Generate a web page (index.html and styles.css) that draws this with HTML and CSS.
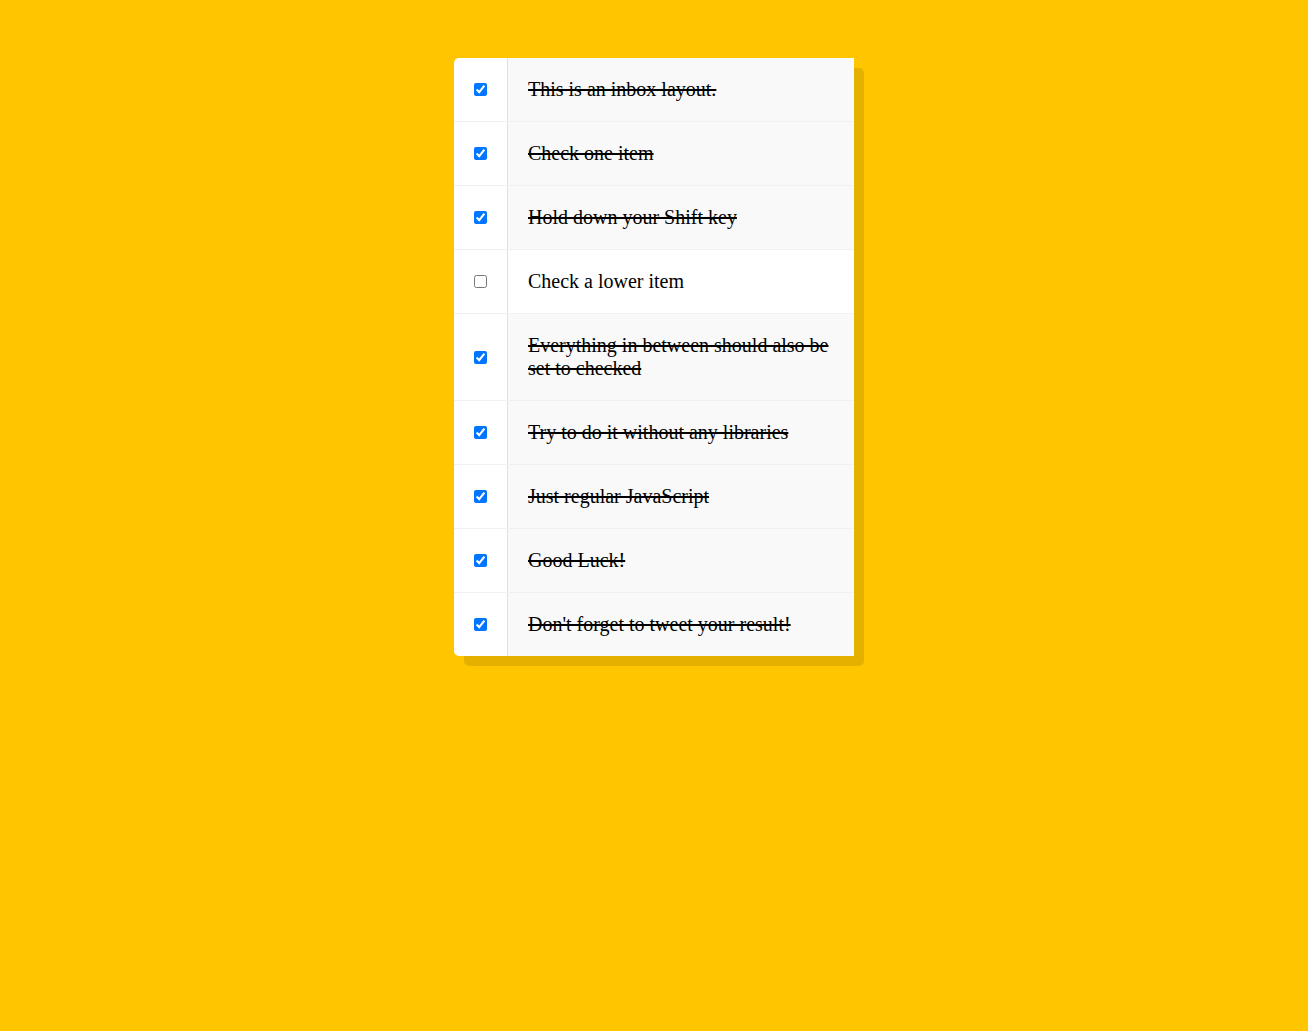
FILE: index.html
```html
<!DOCTYPE html>
<html lang="en">
<head>
<meta charset="UTF-8">
<title>Hold Shift to Check Multiple Checkboxes!</title>
<link rel="stylesheet" href="styles.css">
</head>
<body>
<div class="inbox">
  <div class="item"><input type="checkbox" checked><p>This is an inbox layout.</p></div>
  <div class="item"><input type="checkbox" checked><p>Check one item</p></div>
  <div class="item"><input type="checkbox" checked><p>Hold down your Shift key</p></div>
  <div class="item"><input type="checkbox"><p>Check a lower item</p></div>
  <div class="item"><input type="checkbox" checked><p>Everything in between should also be set to checked</p></div>
  <div class="item"><input type="checkbox" checked><p>Try to do it without any libraries</p></div>
  <div class="item"><input type="checkbox" checked><p>Just regular JavaScript</p></div>
  <div class="item"><input type="checkbox" checked><p>Good Luck!</p></div>
  <div class="item"><input type="checkbox" checked><p>Don't forget to tweet your result!</p></div>
</div>
</body>
</html>
```

FILE: styles.css
```css
html {
  font-family: "Liberation Sans", sans-serif;
  background: #ffc600;
}

body {
  margin: 8px;
}

.inbox {
  max-width: 400px;
  margin: 50px auto;
  background: white;
  border-radius: 5px;
  box-shadow: 10px 10px 0 rgba(0, 0, 0, 0.1);
}

.item {
  display: flex;
  align-items: center;
  border-bottom: 1px solid #f1f1f1;
}

.item:last-child {
  border-bottom: 0;
}

.item input[type="checkbox"] {
  margin: 20px;
}

.item p {
  margin: 0;
  padding: 20px;
  flex: 1;
  font-family: "Liberation Serif", serif;
  font-size: 20px;
  font-weight: 200;
  border-left: 1px solid #d1e2ff;
}

.item input:checked + p {
  background: #f9f9f9;
  text-decoration: line-through;
}
```
